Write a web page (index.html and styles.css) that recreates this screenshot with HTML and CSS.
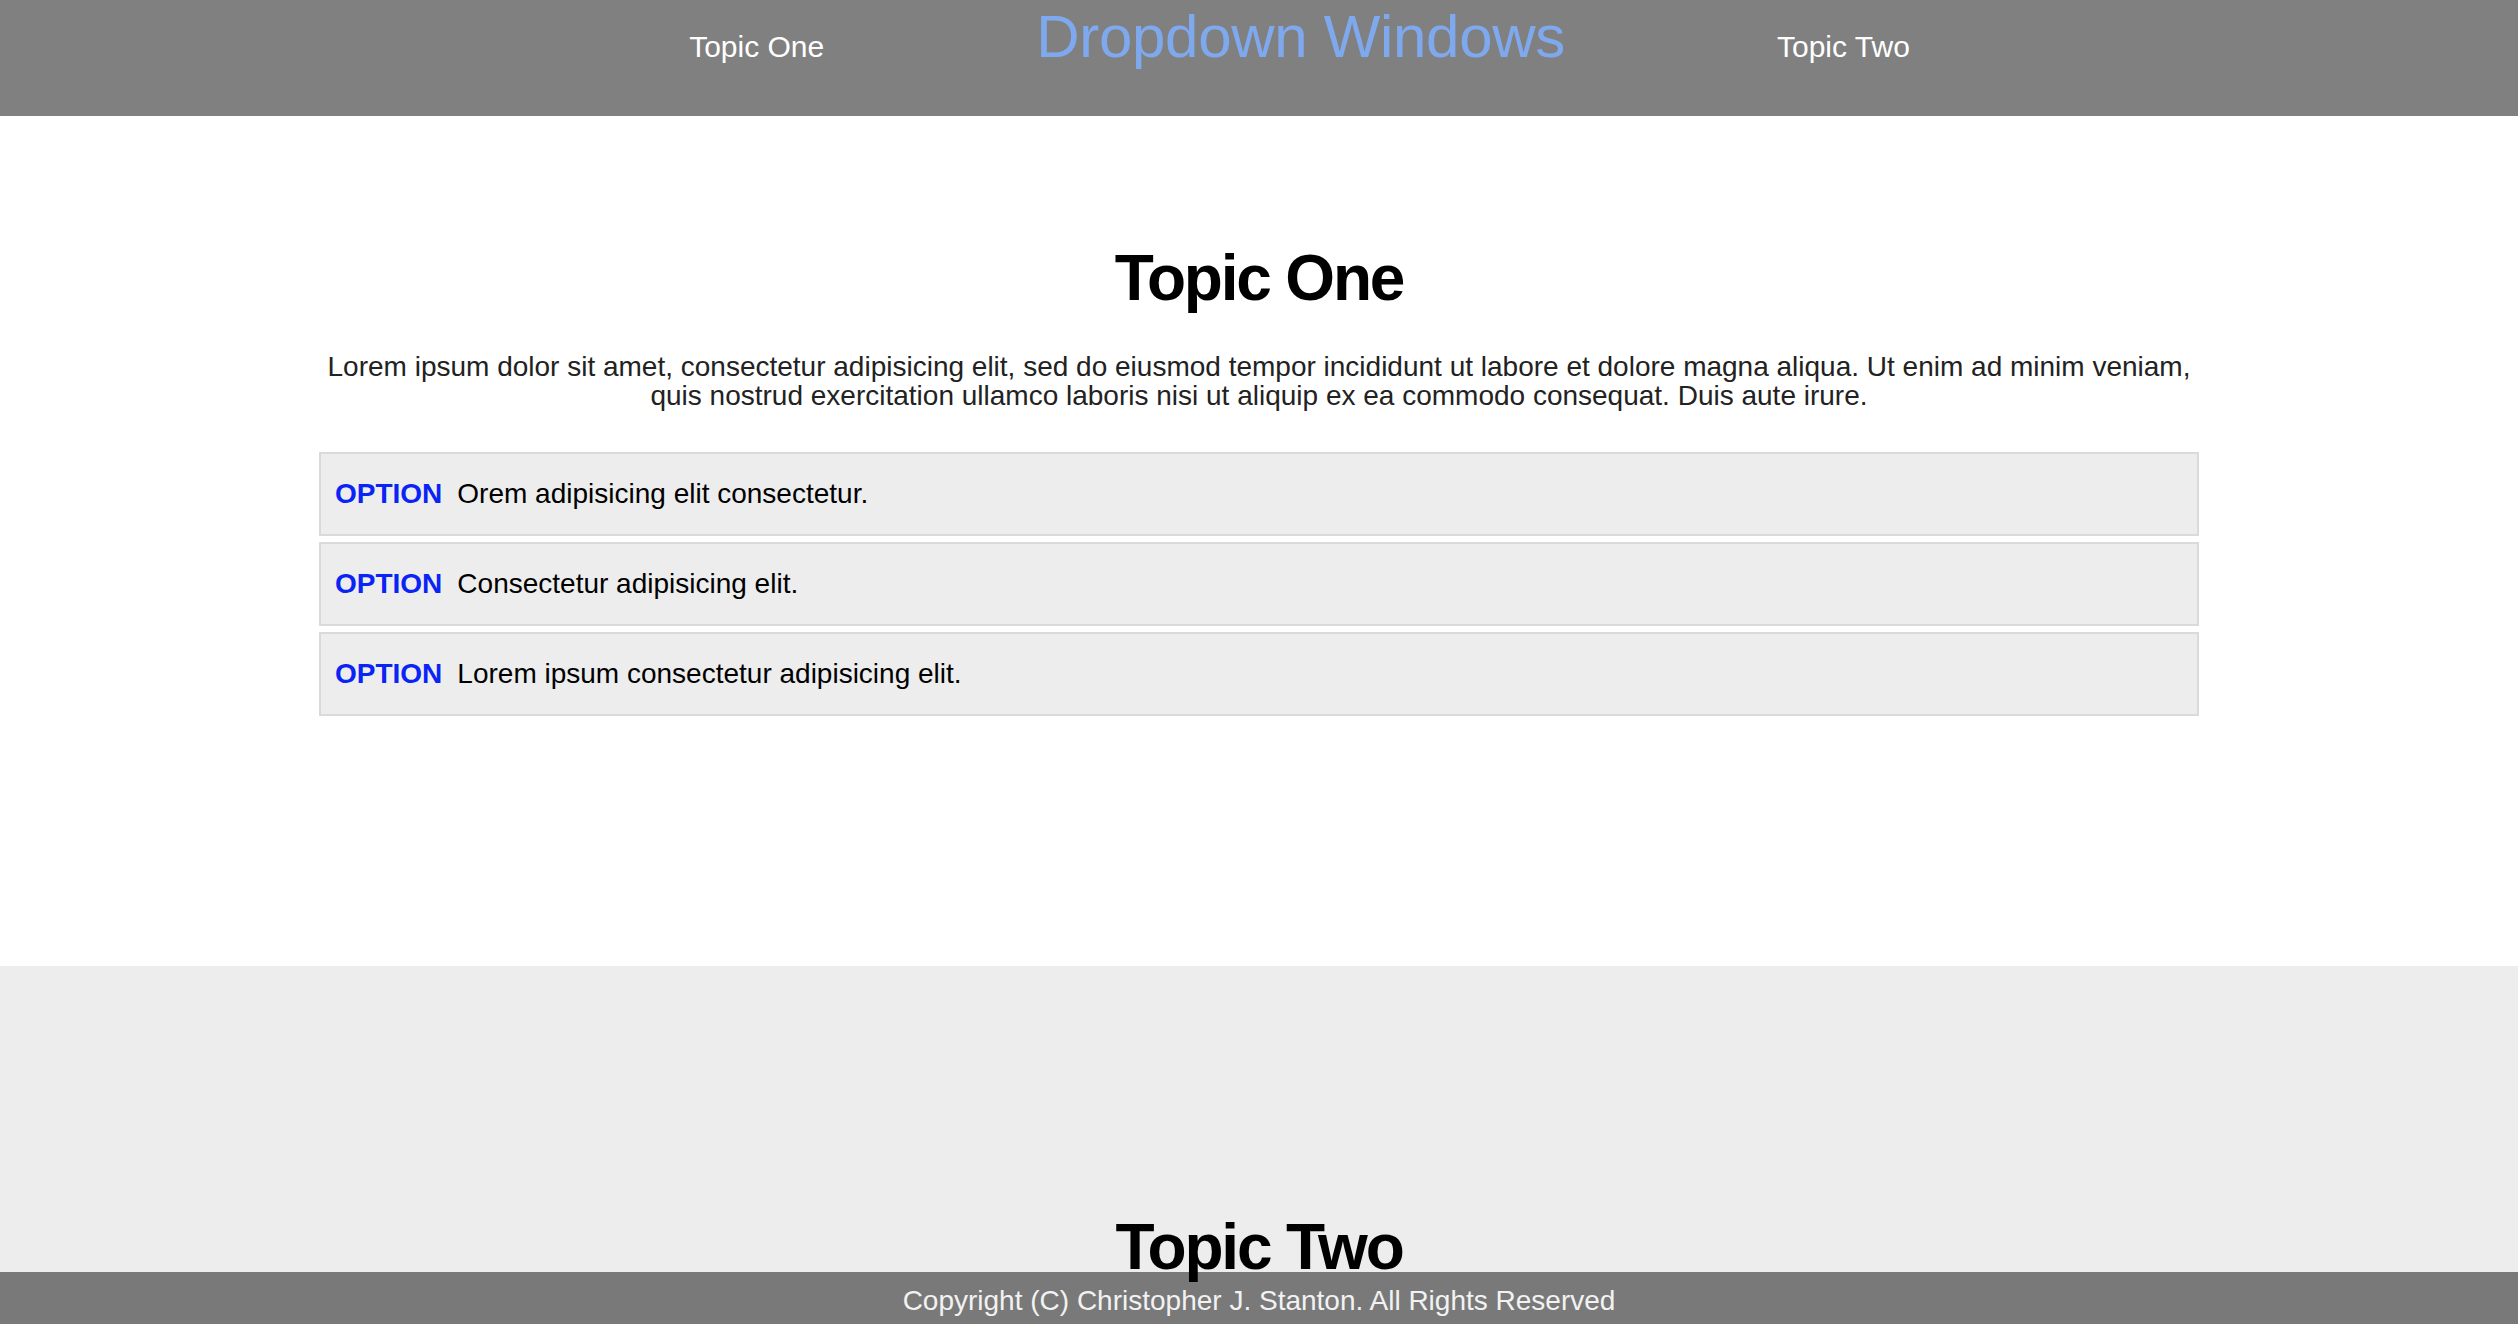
FILE: index.html
```html
<!DOCTYPE html>
<html lang="en">
<head>
<meta charset="utf-8">
<title>Dropdown Windows</title>
<link rel="stylesheet" href="styles.css">
</head>
<body>
<header class="topbar">
  <a class="nav-link nav-one" href="#one">Topic One</a>
  <span class="brand">Dropdown Windows</span>
  <a class="nav-link nav-two" href="#two">Topic Two</a>
</header>
<section class="topic topic-one" id="one">
  <h1 class="topic-title">Topic One</h1>
  <p class="topic-text">Lorem ipsum dolor sit amet, consectetur adipisicing elit, sed do eiusmod tempor incididunt ut labore et dolore magna aliqua. Ut enim ad minim veniam, quis nostrud exercitation ullamco laboris nisi ut aliquip ex ea commodo consequat. Duis aute irure.</p>
  <ul class="options">
    <li class="option"><span class="option-label">OPTION</span>Orem adipisicing elit consectetur.</li>
    <li class="option"><span class="option-label">OPTION</span>Consectetur adipisicing elit.</li>
    <li class="option"><span class="option-label">OPTION</span>Lorem ipsum consectetur adipisicing elit.</li>
  </ul>
</section>
<section class="topic topic-two" id="two">
  <h1 class="topic-title title-two">Topic Two</h1>
</section>
<footer class="footer">Copyright (C) Christopher J. Stanton. All Rights Reserved</footer>
</body>
</html>
```
FILE: styles.css
```css
html, body {
  margin: 0;
  padding: 0;
}
body {
  font-family: "Liberation Sans", Arial, Helvetica, sans-serif;
  background: #ffffff;
  color: #000;
}
.topbar {
  box-sizing: border-box;
  height: 116px;
  background: #808080;
  display: flex;
  align-items: baseline;
  justify-content: center;
  padding: 7px 0 0 81px;
}
.nav-link {
  color: #ffffff;
  text-decoration: none;
  font-size: 30px;
}
.nav-one {
  margin-right: 212px;
}
.nav-two {
  margin-left: 212px;
}
.brand {
  color: #7fa9ee;
  font-size: 60px;
  line-height: 1;
  letter-spacing: -0.3px;
}
.topic {
  box-sizing: border-box;
}
.topic-one {
  height: 850px;
  padding-top: 126px;
}
.topic-title {
  margin: 0;
  text-align: center;
  font-size: 64px;
  font-weight: bold;
  line-height: 1.15;
  letter-spacing: -2.2px;
}
.topic-text {
  width: 1880px;
  margin: 36px auto 0;
  text-align: center;
  font-size: 28px;
  line-height: 29px;
  color: #222;
}
.options {
  list-style: none;
  width: 1880px;
  margin: 42px auto 0;
  padding: 0;
  display: flex;
  flex-direction: column;
  gap: 6px;
}
.option {
  box-sizing: border-box;
  height: 84px;
  background: #ededed;
  border: 2px solid #dadada;
  padding: 24px 14px;
  font-size: 28px;
  line-height: 32px;
  color: #000;
}
.option-label {
  color: #0a24f5;
  font-weight: bold;
  margin-right: 15px;
}
.topic-two {
  background: #ededed;
  min-height: 500px;
  padding-top: 245px;
}
.title-two {
  position: relative;
  z-index: 2;
}
.footer {
  position: fixed;
  left: 0;
  right: 0;
  bottom: 0;
  box-sizing: border-box;
  height: 52px;
  padding-top: 13px;
  background: #797979;
  color: #f2f2f2;
  text-align: center;
  font-size: 28px;
  line-height: 32px;
  z-index: 1;
}
```
